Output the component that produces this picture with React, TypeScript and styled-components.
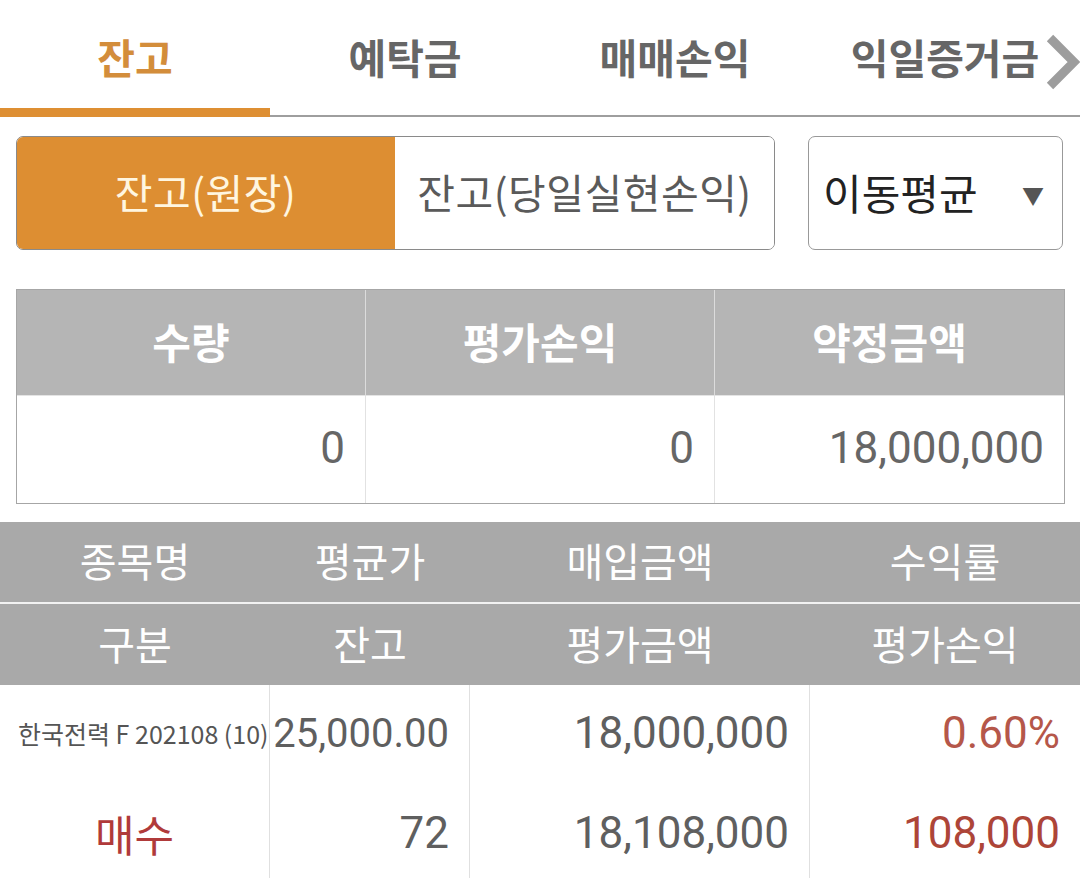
import { createGlobalStyle } from "styled-components";
import styled from "styled-components";

const GlobalStyle = createGlobalStyle`
  body {
    margin: 0;
    background: #fff;
    font-family: Roboto, "Noto Sans CJK KR", "Noto Sans", sans-serif;
  }
`;

const Page = styled.div`
  width: 1080px;
  height: 878px;
  overflow: hidden;
  background: #fff;
`;

const TabBar = styled.div`
  position: relative;
  display: flex;
  font-family: "Noto Sans CJK KR", sans-serif;
`;

const Tab = styled.div<{ $active?: boolean }>`
  flex: 1;
  height: 117px;
  box-sizing: border-box;
  display: flex;
  justify-content: center;
  padding-top: 27px;
  font-size: 41px;
  line-height: 58px;
  font-weight: 700;
  color: ${(p) => (p.$active ? "#d38d3b" : "#666")};
  border-bottom: ${(p) => (p.$active ? "9px solid #de8f33" : "2px solid #9e9e9e")};
`;

const MoreArrow = styled.svg`
  position: absolute;
  right: 0;
  top: 34px;
`;

const Controls = styled.div`
  display: flex;
  padding: 19px 17px 0 16px;
  gap: 33px;
`;

const Segment = styled.div`
  display: flex;
  width: 759px;
  height: 114px;
  box-sizing: border-box;
  border: 1px solid #8a8a8a;
  border-radius: 7px;
  overflow: hidden;
  font-family: "Noto Sans CJK KR", sans-serif;
`;

const SegmentItem = styled.div<{ $active?: boolean }>`
  flex: 1;
  display: flex;
  align-items: center;
  justify-content: center;
  padding-bottom: 4px;
  font-size: 41px;
  letter-spacing: 0.5px;
  background: ${(p) => (p.$active ? "#dd8e32" : "#fff")};
  color: ${(p) => (p.$active ? "#fff6e0" : "#5a5a5a")};
  margin: ${(p) => (p.$active ? "-1px 0 -1px -1px" : "0")};
`;

const Select = styled.div`
  flex: 1;
  height: 114px;
  box-sizing: border-box;
  border: 1px solid #999;
  border-radius: 7px;
  display: flex;
  align-items: center;
  justify-content: space-between;
  padding: 0 18px 4px 14px;
  font-family: "Noto Sans CJK KR", sans-serif;
  font-size: 42px;
  color: #222;
`;

const Caret = styled.span`
  font-size: 22px;
  color: #555;
  padding-top: 6px;
`;

const Summary = styled.div`
  margin: 39px 15px 0 16px;
  border: 1px solid #a6a6a6;
  display: grid;
  grid-template-columns: repeat(3, 1fr);
`;

const SumHead = styled.div<{ $last?: boolean }>`
  height: 106px;
  background: #b5b5b5;
  color: #fff;
  font-family: "Noto Sans CJK KR", sans-serif;
  font-weight: 700;
  font-size: 42px;
  padding-bottom: 4px;
  box-sizing: border-box;
  display: flex;
  align-items: center;
  justify-content: center;
  border-right: ${(p) => (p.$last ? "none" : "1px solid #dcdcdc")};
  border-bottom: 1px solid #e4e4e4;
`;

const SumCell = styled.div<{ $last?: boolean }>`
  height: 107px;
  display: flex;
  align-items: center;
  justify-content: flex-end;
  padding-right: 20px;
  padding-bottom: 4px;
  box-sizing: border-box;
  font-size: 44px;
  color: #666;
  border-right: ${(p) => (p.$last ? "none" : "1px solid #e2e2e2")};
`;

const Detail = styled.div`
  margin-top: 18px;
  display: grid;
  grid-template-columns: 270px 200px 340px 270px;
`;

const HeadRow = styled.div<{ $top?: boolean }>`
  grid-column: 1 / -1;
  display: grid;
  grid-template-columns: 270px 200px 340px 270px;
  height: ${(p) => (p.$top ? "80px" : "81px")};
  background: #a9a9a9;
  border-bottom: ${(p) => (p.$top ? "2px solid #f2f2f2" : "none")};
`;

const HeadCell = styled.div`
  display: flex;
  align-items: center;
  justify-content: center;
  color: #fff;
  font-family: "Noto Sans CJK KR", sans-serif;
  font-size: 40px;
  padding-bottom: 4px;
`;

const Cell = styled.div<{ $color?: string; $size?: number; $last?: boolean }>`
  height: 100px;
  display: flex;
  align-items: center;
  justify-content: flex-end;
  padding: 0 20px 4px 0;
  box-sizing: border-box;
  font-size: ${(p) => p.$size || 44}px;
  color: ${(p) => p.$color || "#5f5f5f"};
  border-right: ${(p) => (p.$last ? "none" : "1px solid #e0e0e0")};
  white-space: nowrap;
`;

const NameCell = styled(Cell)`
  padding: 0 0 4px 18px;
  justify-content: flex-start;
  font-size: 25px;
  color: #555;
  font-family: "Noto Sans CJK KR", Roboto, sans-serif;
`;

const SideCell = styled(Cell)`
  padding: 0 0 4px;
  justify-content: center;
  font-family: "Noto Sans CJK KR", sans-serif;
  font-size: 43px;
  color: #b03a3a;
`;

export default function App() {
  return (
    <Page>
      <GlobalStyle />
      <TabBar>
        <Tab $active>잔고</Tab>
        <Tab>예탁금</Tab>
        <Tab>매매손익</Tab>
        <Tab>익일증거금</Tab>
        <MoreArrow width="36" height="56" viewBox="0 0 36 56">
          <polyline points="6,4 30,28 6,52" fill="none" stroke="#9d9d9d" strokeWidth="9" />
        </MoreArrow>
      </TabBar>

      <Controls>
        <Segment>
          <SegmentItem $active>잔고(원장)</SegmentItem>
          <SegmentItem>잔고(당일실현손익)</SegmentItem>
        </Segment>
        <Select>
          이동평균
          <Caret>▼</Caret>
        </Select>
      </Controls>

      <Summary>
        <SumHead>수량</SumHead>
        <SumHead>평가손익</SumHead>
        <SumHead $last>약정금액</SumHead>
        <SumCell>0</SumCell>
        <SumCell>0</SumCell>
        <SumCell $last>18,000,000</SumCell>
      </Summary>

      <Detail>
        <HeadRow $top>
          <HeadCell>종목명</HeadCell>
          <HeadCell>평균가</HeadCell>
          <HeadCell>매입금액</HeadCell>
          <HeadCell>수익률</HeadCell>
        </HeadRow>
        <HeadRow>
          <HeadCell>구분</HeadCell>
          <HeadCell>잔고</HeadCell>
          <HeadCell>평가금액</HeadCell>
          <HeadCell>평가손익</HeadCell>
        </HeadRow>

        <NameCell>한국전력 F 202108 (10)</NameCell>
        <Cell $size={40}>25,000.00</Cell>
        <Cell>18,000,000</Cell>
        <Cell $last $color="#b5574a">0.60%</Cell>

        <SideCell>매수</SideCell>
        <Cell>72</Cell>
        <Cell>18,108,000</Cell>
        <Cell $last $color="#ad4538">108,000</Cell>
      </Detail>
    </Page>
  );
}
